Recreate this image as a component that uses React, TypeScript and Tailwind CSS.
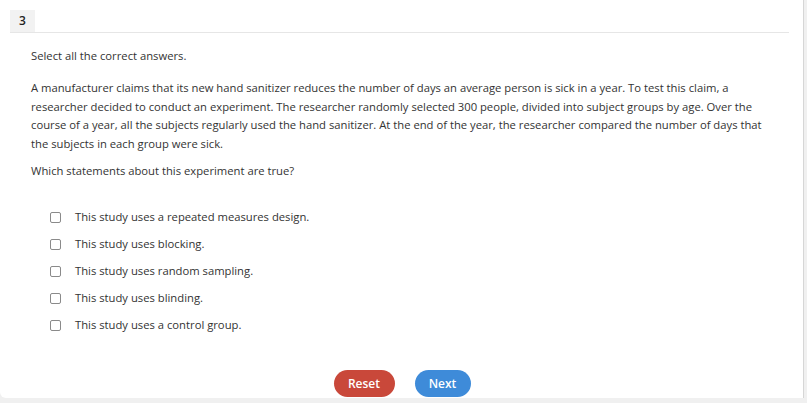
import { useState } from "react";

const options = [
    "This study uses a repeated measures design.",
    "This study uses blocking.",
    "This study uses random sampling.",
    "This study uses blinding.",
    "This study uses a control group.",
];

function Option({ label }: { label: string }) {
    const [checked, setChecked] = useState(false);
    return (
        <label className="flex items-center h-[27px] cursor-pointer">
            <input
                type="checkbox"
                checked={checked}
                onChange={() => setChecked(!checked)}
                className="appearance-none w-[11px] h-[11px] ml-[19px] border border-[#8a8a8a] rounded-[2px] bg-white checked:bg-[#3d8ad9]"
            />
            <span className="ml-[14px]">{label}</span>
        </label>
    );
}

export default function App() {
    return (
        <div className="w-[807px] h-[403px] bg-[#f0f0f0] overflow-hidden" style={{ fontFamily: "'Open Sans', sans-serif" }}>
            <div className="w-[804px] h-[398px] bg-white border-r border-[#d6d6d6] rounded-bl-md flex flex-col text-[11.25px] text-[#333333]">
                <div className="flex mt-[10px] ml-[10px] mr-[14px] border-b border-[#e6e6e6]">
                    <div className="w-[25px] h-[22px] bg-[#f2f2f2] flex items-center justify-center font-semibold text-[12px] text-[#222]">3</div>
                </div>

                <div className="px-[31px] pt-[14px]">
                    <p className="leading-[18px]">Select all the correct answers.</p>
                    <p className="mt-[14px] leading-[18.7px]">
                        A manufacturer claims that its new hand sanitizer reduces the number of days an average person is sick in a year. To test this claim, a researcher decided to conduct an experiment. The researcher randomly selected 300 people, divided into subject groups by age. Over the course of a year, all the subjects regularly used the hand sanitizer. At the end of the year, the researcher compared the number of days that the subjects in each group were sick.
                    </p>
                    <p className="mt-[8px] leading-[18px]">Which statements about this experiment are true?</p>
                </div>

                <div className="flex flex-col px-[31px] mt-[24px]">
                    {options.map((o) => (
                        <Option key={o} label={o} />
                    ))}
                </div>

                <div className="flex justify-center gap-[20px] mt-auto mb-[1px] pl-[1px]">
                    <button className="w-[61px] h-[27px] rounded-full bg-[#c9483a] text-white font-semibold text-[12px]">Reset</button>
                    <button className="w-[56px] h-[27px] rounded-full bg-[#3e8bd9] text-white font-semibold text-[12px]">Next</button>
                </div>
            </div>
        </div>
    );
}
